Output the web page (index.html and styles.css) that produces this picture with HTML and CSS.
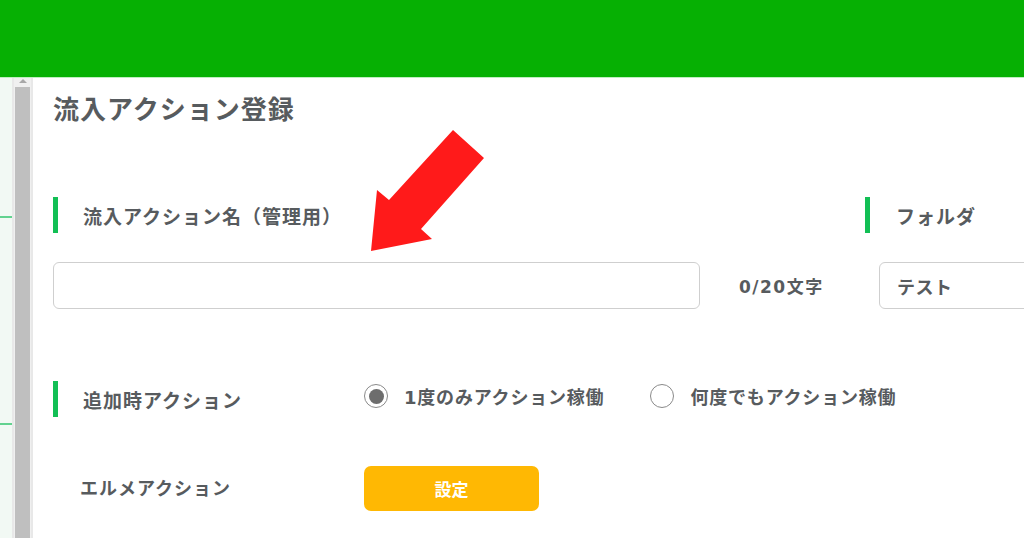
FILE: index.html
```html
<!DOCTYPE html>
<html lang="ja">
<head>
<meta charset="utf-8">
<link rel="stylesheet" href="styles.css">
</head>
<body>
<header class="topbar"></header>
<div class="layout">
  <aside class="side">
    <div class="side-item side-item-1"></div>
    <div class="side-item side-item-2"></div>
  </aside>
  <div class="scroll">
    <div class="scroll-up"></div>
    <div class="scroll-thumb"></div>
  </div>
  <main class="main">
    <h1 class="title">流入アクション登録</h1>
    <div class="row-labels">
      <div class="label name-label"><span class="bar"></span><span>流入アクション名（管理用）</span></div>
      <div class="label folder-label"><span class="bar"></span><span>フォルダ</span></div>
    </div>
    <div class="row-inputs">
      <div class="text-input"></div>
      <div class="counter">0/20文字</div>
      <div class="select">テスト</div>
    </div>
    <div class="row-radio">
      <div class="label add-label"><span class="bar"></span><span>追加時アクション</span></div>
      <div class="radio-group">
        <label class="radio"><span class="dot checked"></span><span>1度のみアクション稼働</span></label>
        <label class="radio"><span class="dot"></span><span>何度でもアクション稼働</span></label>
      </div>
    </div>
    <div class="row-action">
      <div class="action-label">エルメアクション</div>
      <button class="btn">設定</button>
    </div>
  </main>
</div>
<svg class="arrow" width="1024" height="538" viewBox="0 0 1024 538">
  <polygon fill="#ff1a1a" points="371,251 377,190 389,200 453,130 484,158 421,229 432,239"/>
</svg>
</body>
</html>
```
FILE: styles.css
```css
* { box-sizing: border-box; }
html, body { margin: 0; padding: 0; }
body {
  width: 1024px;
  height: 538px;
  overflow: hidden;
  background: #fff;
  font-family: "DejaVu Sans", "Noto Sans CJK JP", sans-serif;
  color: #575b5e;
  position: relative;
}
.topbar {
  height: 78px;
  background: #06b003;
  border-bottom: 1px solid #bfeec0;
}
.layout {
  display: flex;
  height: 460px;
}
.side {
  flex: none;
  width: 12px;
  background: #f2f9f4;
  display: flex;
  flex-direction: column;
}
.side-item { border-bottom: 2px solid #62d28f; }
.side-item-1 { height: 140px; }
.side-item-2 { height: 207px; }
.scroll {
  flex: none;
  width: 21px;
  background: #f0f0f0;
  border-left: 2px solid #e8e8e8;
  border-right: 2px solid #e8e8e8;
  display: flex;
  flex-direction: column;
  align-items: center;
}
.scroll-up {
  width: 0; height: 0;
  margin-top: 1px;
  border-left: 4px solid transparent;
  border-right: 4px solid transparent;
  border-bottom: 4px solid #a8a8a8;
}
.scroll-thumb {
  margin-top: 4px;
  width: 15px;
  flex: 1;
  background: #bfbfbf;
}
.main {
  flex: 1;
  min-width: 0;
  overflow: hidden;
  padding-left: 20px;
  display: flex;
  flex-direction: column;
}
.title {
  margin: 13px 0 0;
  font-size: 26px;
  font-weight: 700;
  line-height: 38px;
  letter-spacing: 1px;
  color: #575b5e;
  white-space: nowrap;
}
.label {
  display: flex;
  align-items: center;
  font-size: 19px;
  font-weight: 700;
  letter-spacing: 1px;
  color: #575b5e;
  white-space: nowrap;
}
.bar {
  flex: none;
  width: 5px;
  height: 36px;
  background: #12bf55;
  margin-right: 25px;
}
.row-labels {
  display: flex;
  margin-top: 68px;
}
.name-label { flex: none; width: 812px; }
.folder-label .bar { margin-right: 26px; }
.row-inputs {
  display: flex;
  align-items: center;
  margin-top: 29px;
}
.text-input {
  flex: none;
  width: 647px;
  height: 47px;
  border: 1px solid #cfcfcf;
  border-radius: 6px;
}
.counter {
  flex: none;
  width: 179px;
  padding-left: 39px;
  font-size: 17px;
  font-weight: 700;
  letter-spacing: 1.5px;
  white-space: nowrap;
}
.select {
  flex: none;
  width: 200px;
  height: 47px;
  border: 1px solid #cfcfcf;
  border-radius: 6px;
  padding-left: 17px;
  display: flex;
  align-items: center;
  font-size: 18px;
  font-weight: 700;
  letter-spacing: 0.5px;
}
.row-radio {
  display: flex;
  align-items: center;
  margin-top: 72px;
}
.add-label { flex: none; width: 311px; }
.radio-group {
  display: flex;
  align-items: center;
  margin-top: -6px;
}
.radio {
  display: flex;
  align-items: center;
  font-size: 18px;
  font-weight: 700;
  letter-spacing: 0.8px;
  white-space: nowrap;
}
.radio + .radio { margin-left: 46px; }
.dot {
  flex: none;
  width: 24px;
  height: 24px;
  border: 1.5px solid #8a8a8a;
  border-radius: 50%;
  margin-right: 16px;
  display: flex;
  align-items: center;
  justify-content: center;
  background: #fff;
}
.dot.checked::after {
  content: "";
  width: 15px;
  height: 15px;
  border-radius: 50%;
  background: #6d6d6d;
}
.row-action {
  display: flex;
  align-items: center;
  margin-top: 49px;
}
.action-label {
  flex: none;
  width: 311px;
  padding-left: 27px;
  padding-bottom: 4px;
  font-size: 18px;
  font-weight: 700;
  letter-spacing: 1px;
  white-space: nowrap;
}
.btn {
  flex: none;
  width: 175px;
  height: 45px;
  background: #ffb803;
  border: none;
  border-radius: 7px;
  color: #fff;
  font-family: inherit;
  font-size: 17px;
  font-weight: 700;
}
.arrow {
  position: absolute;
  left: 0;
  top: 0;
  pointer-events: none;
}
```
